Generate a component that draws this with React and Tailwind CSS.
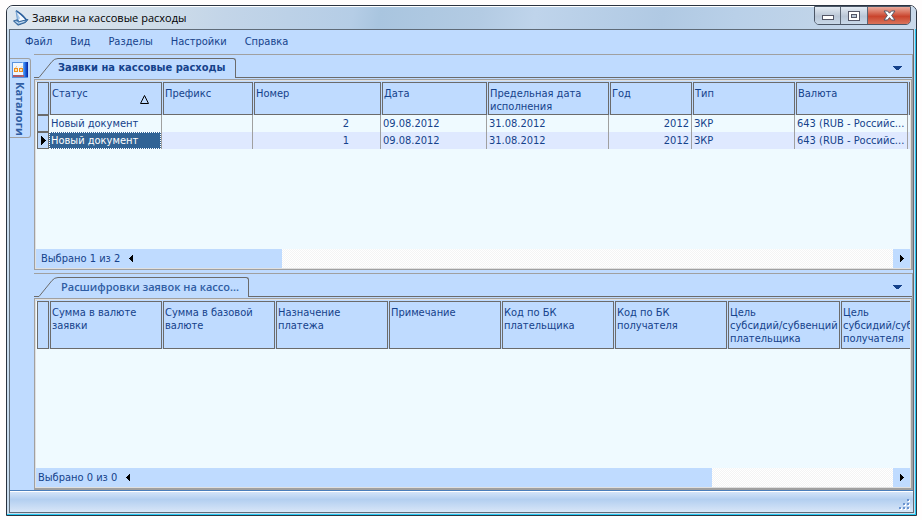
import React, { useState } from 'react';

const REQUEST_COLUMNS = [
  { key: 'status', title: 'Статус', width: 'w-[113px]', sorted: true },
  { key: 'prefix', title: 'Префикс', width: 'w-[91px]' },
  { key: 'number', title: 'Номер', width: 'w-[128px]', cell: 'text-right pr-[31px]' },
  { key: 'date', title: 'Дата', width: 'w-[106px]' },
  { key: 'deadline', title: 'Предельная дата\nисполнения', width: 'w-[122px]' },
  { key: 'year', title: 'Год', width: 'w-[83px]', cell: 'text-right pr-[2px]' },
  { key: 'type', title: 'Тип', width: 'w-[103px]' },
  { key: 'currency', title: 'Валюта', width: 'w-[113px]' },
  { key: 'extra', title: '', width: 'w-[113px]' },
];

const REQUESTS = [
  { id: 2, status: 'Новый документ', number: 2, date: '09.08.2012', deadline: '31.08.2012', year: 2012, type: 'ЗКР', currency: '643 (RUB - Российс...' },
  { id: 1, status: 'Новый документ', number: 1, date: '09.08.2012', deadline: '31.08.2012', year: 2012, type: 'ЗКР', currency: '643 (RUB - Российс...' },
];

const DETAIL_COLUMNS = [
  { key: 'sum', title: 'Сумма в валюте\nзаявки', width: 'w-[113px]' },
  { key: 'baseSum', title: 'Сумма в базовой\nвалюте', width: 'w-[113px]' },
  { key: 'purpose', title: 'Назначение\nплатежа', width: 'w-[113px]' },
  { key: 'note', title: 'Примечание', width: 'w-[113px]' },
  { key: 'payerCode', title: 'Код по БК\nплательщика', width: 'w-[113px]' },
  { key: 'payeeCode', title: 'Код по БК\nполучателя', width: 'w-[113px]' },
  { key: 'payerGoal', title: 'Цель\nсубсидий/субвенций\nплательщика', width: 'w-[113px]' },
  { key: 'payeeGoal', title: 'Цель\nсубсидий/субвенций\nполучателя', width: 'w-[113px]' },
];

const MENU = ['Файл', 'Вид', 'Разделы', 'Настройки', 'Справка'];

const AppLogo = () => (
  <svg width="16" height="16" viewBox="0 0 16 16" aria-hidden="true">
    <path d="M3 0.8 L13 9.5 L4.5 12 Z" fill="#f4f9ff" />
    <path d="M3 0.8 L4.5 12 L7 8 Z" fill="#a9c9ea" />
    <path d="M3 0.8 Q8 3.5 13.5 10" fill="none" stroke="#2b5f9c" strokeWidth="1.6" />
    <path d="M3 0.8 L4.6 11" fill="none" stroke="#6b9bcd" strokeWidth="0.9" />
    <path d="M0.5 11 L4 9.8 L6.5 11.5 L15 9.5 L12.5 12.5 L5 15.2 Z" fill="#5f90c2" stroke="#24588f" strokeWidth="0.9" />
    <path d="M2.5 11.4 L5.5 13.2 L11.5 11.4" fill="none" stroke="#dfeefc" strokeWidth="0.9" />
  </svg>
);

const CatalogIcon = () => (
  <svg width="16" height="16" viewBox="0 0 16 16" className="shrink-0" aria-hidden="true">
    <defs>
      <linearGradient id="cover" x1="0" x2="1">
        <stop offset="0" stopColor="#8fc4fb" />
        <stop offset="0.5" stopColor="#2470e6" />
        <stop offset="1" stopColor="#06229c" />
      </linearGradient>
    </defs>
    <rect x="0" y="0" width="16" height="16" fill="#5b93df" />
    <rect x="10" y="0" width="6" height="15" fill="url(#cover)" />
    <rect x="1" y="1" width="10" height="12" fill="#eef5ff" />
    <path d="M1 14 H12" stroke="#c9473f" strokeWidth="1.4" />
    <rect x="2.5" y="6.5" width="3" height="3" fill="#ffe2b0" stroke="#f0901c" />
    <rect x="7.5" y="6.5" width="3" height="3" fill="#ffe2b0" stroke="#f0901c" />
    <path d="M3.5 5.5 L5 4.5 M9 5.5 L10 4.5" stroke="#f5b55c" />
  </svg>
);

const CaptionButtons = () => (
  <div className="flex h-[19px] -mt-px mr-[5px] rounded-b-[5px] border border-[#4b5666] overflow-hidden">
    <button aria-label="Свернуть" className="w-[26px] flex items-center justify-center pt-1 border-r border-[#5b6675] bg-linear-to-b from-[#e4ebf3] via-[#b9c6d6] via-55% to-[#c9d9e9]">
      <svg width="12" height="5" shapeRendering="crispEdges">
        <rect x="0.5" y="0.5" width="11" height="4" fill="#fff" stroke="#535666" />
      </svg>
    </button>
    <button aria-label="Развернуть" className="w-[27px] flex items-center justify-center border-r border-[#5b6675] bg-linear-to-b from-[#e4ebf3] via-[#b9c6d6] via-55% to-[#c9d9e9]">
      <svg width="12" height="10" shapeRendering="crispEdges">
        <rect x="0.5" y="0.5" width="11" height="9" fill="#fff" stroke="#535666" />
        <rect x="3.5" y="3.5" width="5" height="3" fill="#b9c8d8" stroke="#535666" />
      </svg>
    </button>
    <button aria-label="Закрыть" className="w-[42px] flex items-center justify-center bg-linear-to-b from-[#e9a99b] via-[#c9432c] via-55% to-[#d9735a]">
      <svg width="13" height="11" viewBox="0 0 13 11">
        <path d="M1 1 H4.5 L6.5 3.2 L8.5 1 H12 L8.6 5.5 L12 10 H8.5 L6.5 7.6 L4.5 10 H1 L4.4 5.5 Z" fill="#fff" stroke="#535666" strokeWidth="1" />
      </svg>
    </button>
  </div>
);

const Tab = ({ title, active }) => (
  <div className="flex h-[23px] items-end">
    <svg width="24" height="20" className="shrink-0" aria-hidden="true">
      <path d="M0 19.5 H5 L18 3.5 Q20.5 0.5 24 0.5" fill="none" stroke="#6b6b6b" />
    </svg>
    <button
      className={
        active
          ? 'h-5 pr-[10px] pb-[2px] whitespace-nowrap border-t border-r border-[#6b6b6b] rounded-tr-[3px] font-bold text-[11px] leading-[17px]'
          : "h-5 pl-[3px] pr-[9px] pb-[2px] whitespace-nowrap border-t border-r border-[#6b6b6b] rounded-tr-[3px] font-['Open_Sans',sans-serif] font-semibold text-[11px] leading-[17px] text-[#2f5da3]"
      }
    >
      {title}
    </button>
    <div className="flex-1 h-[23px] flex items-center justify-end border-b border-[#6b6b6b]">
      <button aria-label="Список вкладок" className="mr-[10px] mt-1">
        <svg width="9" height="4" shapeRendering="crispEdges">
          <path d="M0 0 H9 V1 H8 V2 H7 V3 H6 V4 H3 V3 H2 V2 H1 V1 H0 Z" fill="#15428b" />
        </svg>
      </button>
    </div>
  </div>
);

const Grid = ({ columns, rows, tall, selected, onSelect }) => (
  <table className="table-fixed w-px border-collapse text-left">
    <colgroup>
      <col className="w-[12px]" />
      {columns.map(col => <col key={col.key} className={col.width} />)}
    </colgroup>
    <thead>
      <tr className="bg-[#bfdbff]">
        <th className="p-0"><div className={`${tall ? 'h-12' : 'h-[33px]'} border border-[#6b6b6b]`} /></th>
        {columns.map(col => (
          <th key={col.key} className="p-0 font-normal align-top">
            <div className={`${tall ? 'h-12' : 'h-[33px]'} ml-px pl-px pt-1 flex border border-[#6b6b6b] leading-[13px]`}>
              <span className="flex-1 whitespace-pre">{col.title}</span>
              {col.sorted && (
                <svg width="9" height="9" className="mt-2 mr-3 shrink-0" aria-hidden="true">
                  <path d="M0.5 8.5 L4.5 0.5 L8.5 8.5 Z" fill="none" stroke="#000" />
                </svg>
              )}
            </div>
          </th>
        ))}
      </tr>
    </thead>
    <tbody>
      {rows.map((row, i) => (
        <tr key={row.id} onClick={() => onSelect(row.id)} className={i % 2 ? 'bg-[#dfe9ff]' : ''}>
          <td className="p-0">
            <div className="h-[17px] flex items-center justify-center border border-[#6b6b6b] bg-[#bfdbff]">
              {selected === row.id && (
                <svg width="5" height="9" shapeRendering="crispEdges" aria-hidden="true">
                  <path d="M0 0 H1 V1 H2 V2 H3 V3 H4 V4 H5 V5 H4 V6 H3 V7 H2 V8 H1 V9 H0 Z" />
                </svg>
              )}
            </div>
          </td>
          {columns.map(col => (
            <td key={col.key} className="p-0">
              <div className="h-[17px] border-r border-[#a0a0a0]">
                <div
                  className={`h-full pl-[2px] leading-[18px] whitespace-nowrap overflow-hidden ${col.cell || ''} ${
                    selected === row.id && col.key === 'status'
                      ? 'bg-[#316395] text-white outline-1 outline-dotted -outline-offset-1 outline-white'
                      : ''
                  }`}
                >
                  {row[col.key]}
                </div>
              </div>
            </td>
          ))}
        </tr>
      ))}
    </tbody>
  </table>
);

const ScrollBar = ({ label, thumb, track, pad }) => (
  <div className="flex h-[19px] bg-[#bfdbff]">
    <div className={`${thumb} basis-0 flex items-center whitespace-nowrap`}>
      <span className={`${pad} pt-px`}>{label}</span>
      <button aria-label="Влево" className="ml-[9px]">
        <svg width="4" height="7" shapeRendering="crispEdges">
          <path d="M4 0 V7 H3 V6 H2 V5 H1 V4 H0 V3 H1 V2 H2 V1 H3 V0 Z" />
        </svg>
      </button>
    </div>
    <div className={`${track} basis-0 bg-[repeating-conic-gradient(#f4f4f4_0_25%,#ffffff_0_50%)] bg-[length:2px_2px]`} />
    <button aria-label="Вправо" className="w-[17px] flex items-center justify-center">
      <svg width="4" height="7" shapeRendering="crispEdges">
        <path d="M0 0 H1 V1 H2 V2 H3 V3 H4 V4 H3 V5 H2 V6 H1 V7 H0 Z" />
      </svg>
    </button>
  </div>
);

const Panel = ({ title, active, children, footer }) => (
  <section className="flex-1 min-h-0 flex flex-col border-t border-r border-[#a0a0a0]">
    <Tab title={title} active={active} />
    <div className="flex-1 min-h-0 mt-px flex flex-col border border-[#a0a0a0]">
      <div className="flex-1 min-h-0 flex flex-col border border-[#e0e0e0]">
        <div className="flex-1 min-h-0 overflow-hidden pl-px border-t border-[#bfdbff] bg-[#effaff]">{children}</div>
        {footer}
      </div>
    </div>
  </section>
);

const App = () => {
  const [selected, setSelected] = useState(1);

  return (
    <div className="h-screen pt-[5px] pl-[6px] pr-[5px] pb-1 bg-[#fffdfd] font-['DejaVu_Sans_Condensed','DejaVu_Sans',sans-serif] text-[11px] text-[#15428b]">
      <div className="h-full flex flex-col border border-[#2b3340] rounded-t-[7px] bg-[#c9dcee] overflow-hidden">
        {/* Title bar */}
        <header className="h-[23px] shrink-0 flex items-start justify-between border-t border-white bg-[linear-gradient(100deg,#dfe7ef_0%,#cfdde9_16%,#c3d5e8_24%,#b5cde6_38%,#a9c5df_41%,#b3cbe3_52%,#bfd4eb_58%,#b0c9e3_72%,#b9d0e8_80%,#c9d9ea_100%)]">
          <div className="flex items-center gap-[3px] pl-[6px] h-[22px]">
            <AppLogo />
            <h1 className="font-['Open_Sans',sans-serif] text-[11px] text-black">Заявки на кассовые расходы</h1>
          </div>
          <CaptionButtons />
        </header>

        <div className="flex-1 min-h-0 flex flex-col pl-[2px] pr-px pb-px border-r border-b border-[#25c9f2]">
          <div className="flex-1 min-h-0 flex flex-col border border-[#5f6b78] bg-[#bfdbff]">
            {/* Menu */}
            <nav className="h-6 shrink-0 flex items-center gap-[18px] pl-[15px] pt-px">
              {MENU.map(item => (
                <button key={item}>{item}</button>
              ))}
            </nav>

            <div className="flex-1 min-h-0 flex">
              <aside className="w-6 shrink-0">
                <button className="mt-1 w-[21px] h-20 flex flex-col items-center gap-1 pt-[3px] border border-l-0 border-[#a0a0a0] rounded-r-[3px]">
                  <CatalogIcon />
                  <span className="[writing-mode:vertical-rl] font-['Open_Sans',sans-serif] font-bold text-[11px] leading-[14px] text-[#2f5da3]">Каталоги</span>
                </button>
              </aside>

              <main className="flex-1 min-w-0 flex flex-col gap-[3px] border-b border-[#a0a0a0]">
                <Panel
                  title="Заявки на кассовые расходы"
                  active
                  footer={<ScrollBar label="Выбрано 1 из 2" pad="pl-[5px]" thumb="grow-[246]" track="grow-[611]" />}
                >
                  <Grid columns={REQUEST_COLUMNS} rows={REQUESTS} selected={selected} onSelect={setSelected} />
                </Panel>
                <Panel
                  title="Расшифровки заявок на кассо..."
                  footer={<ScrollBar label="Выбрано 0 из 0" pad="pl-[2px]" thumb="grow-[676]" track="grow-[181]" />}
                >
                  <Grid columns={DETAIL_COLUMNS} rows={[]} tall />
                </Panel>
              </main>
            </div>

            {/* Status bar */}
            <footer className="h-[22px] shrink-0 flex items-end justify-end border-t border-[#4a7ebb] shadow-[inset_0_1px_0_#ffffff] bg-linear-to-b from-[#d7e6f9] via-[#b3cff0] via-40% to-[#d8e6f8]">
              <svg width="12" height="12" className="mr-[2px] mb-[1px]" shapeRendering="crispEdges" aria-hidden="true">
                <path d="M9 1h2v2h-2z M5 5h2v2h-2z M9 5h2v2h-2z M1 9h2v2h-2z M5 9h2v2h-2z M9 9h2v2h-2z" fill="#fff" />
                <path d="M8 0h2v2h-2z M4 4h2v2h-2z M8 4h2v2h-2z M0 8h2v2h-2z M4 8h2v2h-2z M8 8h2v2h-2z" fill="#6a93cf" />
              </svg>
            </footer>
          </div>
        </div>
      </div>
    </div>
  );
};

export default App;
